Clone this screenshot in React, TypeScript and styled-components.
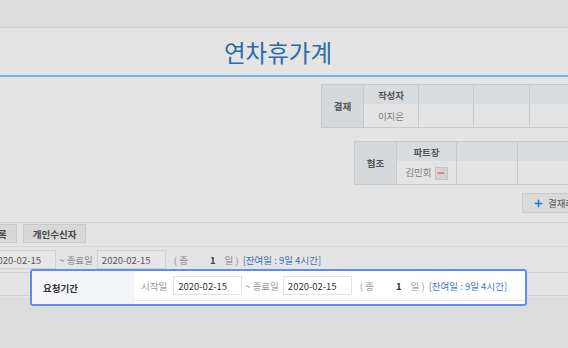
import React from 'react';
import styled, { createGlobalStyle } from 'styled-components';
import { Plus, Minus } from 'lucide-react';

const GlobalStyle = createGlobalStyle`
  html, body {
    margin: 0;
    padding: 0;
  }
  body {
    width: 568px;
    height: 348px;
    overflow: hidden;
    background: #dddddd;
    font-family: "Noto Sans CJK KR", "Noto Sans", sans-serif;
    font-size: 9.5px;
    color: #666;
  }
`;

const Page = styled.div`
  position: relative;
  width: 568px;
  height: 348px;
  overflow: hidden;
  background: #dddddd;
`;

const TopBar = styled.div`
  height: 27px;
  background: #dcdcdc;
  border-bottom: 1px solid #d0d0d0;
`;

const TitleBar = styled.div`
  height: 47px;
  background: #e4e4e4;
  border-bottom: 2px solid #7eafdc;
  display: flex;
  align-items: center;
  justify-content: center;
  padding-right: 12px;
`;

const Title = styled.h1`
  margin: 0;
  font-size: 23.5px;
  font-weight: 400;
  color: #2b6ba7;
`;

const Content = styled.div`
  background: #e4e4e4;
  padding-top: 7px;
`;

const SignTable = styled.table<{ $left: number; $top?: number; $width: number }>`
  width: ${p => p.$width}px;
  margin-left: ${p => p.$left}px;
  margin-top: ${p => p.$top || 0}px;
  border-collapse: collapse;
  table-layout: fixed;
  font-size: 9.5px;
`;

const LabelCell = styled.th<{ $w: number }>`
  width: ${p => p.$w}px;
  padding: 0;
  background: #d6d9dc;
  border: 1px solid #c9c9c9;
  color: #555;
  font-weight: 700;
`;

const HeadCell = styled.th<{ $w: number }>`
  width: ${p => p.$w}px;
  height: 19px;
  padding: 0;
  background: #d9dcdf;
  border: 1px solid #c9c9c9;
  border-bottom: 0;
  color: #555;
  font-weight: 700;
`;

const BodyCell = styled.td`
  height: 23px;
  padding: 0;
  background: #e4e4e4;
  border: 1px solid #c9c9c9;
  border-top: 0;
  color: #7a7a7a;
  text-align: center;
  white-space: nowrap;
`;

const RemoveBtn = styled.span`
  display: inline-flex;
  align-items: center;
  justify-content: center;
  width: 11px;
  height: 11px;
  margin-left: 3px;
  vertical-align: middle;
  background: #d2d2d2;
  border: 1px solid #c4c4c4;
  color: #e25555;
`;

const AddRow = styled.div`
  margin-top: 8px;
  padding-left: 522px;
  white-space: nowrap;
`;

const AddButton = styled.span`
  display: inline-flex;
  align-items: center;
  gap: 4px;
  height: 18px;
  padding: 0 9px 0 10px;
  background: #dadada;
  border: 1px solid #c9c9c9;
  color: #555;
`;

const Toolbar = styled.div`
  margin-top: 9px;
  border-top: 1px solid #d3d3d3;
  padding-top: 1px;
  display: flex;
  gap: 6px;
  margin-left: -47px;
  white-space: nowrap;
`;

const ToolButton = styled.span`
  display: inline-flex;
  align-items: center;
  height: 17px;
  padding: 0 9px;
  background: #d8d8d8;
  border: 1px solid #cacaca;
  color: #444;
  font-weight: 700;
`;

const FormTable = styled.div`
  margin-top: 3px;
  border-top: 1px solid #d6d6d6;
`;

const FormRow = styled.div<{ $h: number }>`
  height: ${p => p.$h}px;
  border-bottom: 1px solid #d2d2d2;
  display: flex;
  align-items: center;
  white-space: nowrap;
`;

const Shifted = styled.div`
  display: flex;
  align-items: center;
  margin-left: -45px;
`;

const FooterGap = styled.div`
  height: 2px;
  border-bottom: 1px solid #d6d6d6;
  background: #e4e4e4;
`;

const Spotlight = styled.div`
  position: absolute;
  left: 30px;
  top: 269px;
  width: 493px;
  height: 33px;
  border: 2px solid #5b8ef0;
  border-radius: 3px;
  background: #ffffff;
  display: flex;
`;

const SpotLabel = styled.div`
  width: 92px;
  padding-left: 11px;
  background: #f3f5f8;
  display: flex;
  align-items: center;
  color: #333;
  font-weight: 700;
`;

const SpotBody = styled.div`
  flex: 1;
  height: 29px;
  border-bottom: 1px solid #e6e6e6;
  display: flex;
  align-items: center;
  padding-left: 6px;
  white-space: nowrap;
`;

const FieldLabel = styled.span<{ $dim?: boolean; $gap?: number }>`
  margin-left: ${p => p.$gap || 0}px;
  color: ${p => (p.$dim ? '#8a8a8a' : '#999')};
`;

const DateBox = styled.input<{ $dim?: boolean; $gap: number }>`
  box-sizing: border-box;
  width: 69px;
  height: 19px;
  margin: 0 0 0 ${p => p.$gap}px;
  padding: 0 0 0 4px;
  font: inherit;
  color: ${p => (p.$dim ? '#555' : '#333')};
  background: ${p => (p.$dim ? '#e6e6e6' : '#fff')};
  border: 1px solid ${p => (p.$dim ? '#d0d0d0' : '#e2e2e2')};
  outline: none;
`;

const Count = styled.span<{ $dim?: boolean }>`
  margin-left: 22px;
  font-weight: 700;
  color: ${p => (p.$dim ? '#444' : '#333')};
`;

const Remain = styled.span<{ $dim?: boolean }>`
  margin-left: 4px;
  color: ${p => (p.$dim ? '#3b6fb4' : '#3a78d4')};
`;

function PeriodFields({ dim }: { dim?: boolean }) {
  return (
    <>
      <FieldLabel $dim={dim}>시작일</FieldLabel>
      <DateBox $dim={dim} $gap={6} readOnly value="2020-02-15" />
      <FieldLabel $dim={dim} $gap={3}>~ 종료일</FieldLabel>
      <DateBox $dim={dim} $gap={4} readOnly value="2020-02-15" />
      <FieldLabel $dim={dim} $gap={8}>( 종</FieldLabel>
      <Count $dim={dim}>1</Count>
      <FieldLabel $dim={dim} $gap={9}>일 )</FieldLabel>
      <Remain $dim={dim}>[잔여일 : 9일 4시간]</Remain>
    </>
  );
}

const approvers = [54, 54, 55, 54];
const partners = [60, 60];

export default function App() {
  return (
    <Page>
      <GlobalStyle />
      <TopBar />
      <TitleBar>
        <Title>연차휴가계</Title>
      </TitleBar>
      <Content>
        <SignTable $left={321} $width={258}>
          <tbody>
            <tr>
              <LabelCell $w={41} rowSpan={2}>결재</LabelCell>
              <HeadCell $w={54}>작성자</HeadCell>
              {approvers.slice(1).map((w, i) => (
                <HeadCell key={i} $w={w} />
              ))}
            </tr>
            <tr>
              <BodyCell>이지은</BodyCell>
              {approvers.slice(1).map((_, i) => (
                <BodyCell key={i} />
              ))}
            </tr>
          </tbody>
        </SignTable>
        <SignTable $left={354} $top={13} $width={220}>
          <tbody>
            <tr>
              <LabelCell $w={41} rowSpan={2}>협조</LabelCell>
              <HeadCell $w={59}>파트장</HeadCell>
              {partners.map((w, i) => (
                <HeadCell key={i} $w={w} />
              ))}
            </tr>
            <tr>
              <BodyCell>
                김민회
                <RemoveBtn>
                  <Minus size={10} strokeWidth={3} />
                </RemoveBtn>
              </BodyCell>
              {partners.map((_, i) => (
                <BodyCell key={i} />
              ))}
            </tr>
          </tbody>
        </SignTable>
        <AddRow>
          <AddButton>
            <Plus size={11} strokeWidth={3} color="#1f6fc6" />
            결재라인 지정
          </AddButton>
        </AddRow>
        <Toolbar>
          <ToolButton>수신자목록</ToolButton>
          <ToolButton>개인수신자</ToolButton>
        </Toolbar>
        <FormTable>
          <FormRow $h={25}>
            <Shifted>
              <PeriodFields dim />
            </Shifted>
          </FormRow>
          <FormRow $h={22} />
          <FooterGap />
        </FormTable>
      </Content>
      <Spotlight>
        <SpotLabel>요청기간</SpotLabel>
        <SpotBody>
          <PeriodFields />
        </SpotBody>
      </Spotlight>
    </Page>
  );
}
